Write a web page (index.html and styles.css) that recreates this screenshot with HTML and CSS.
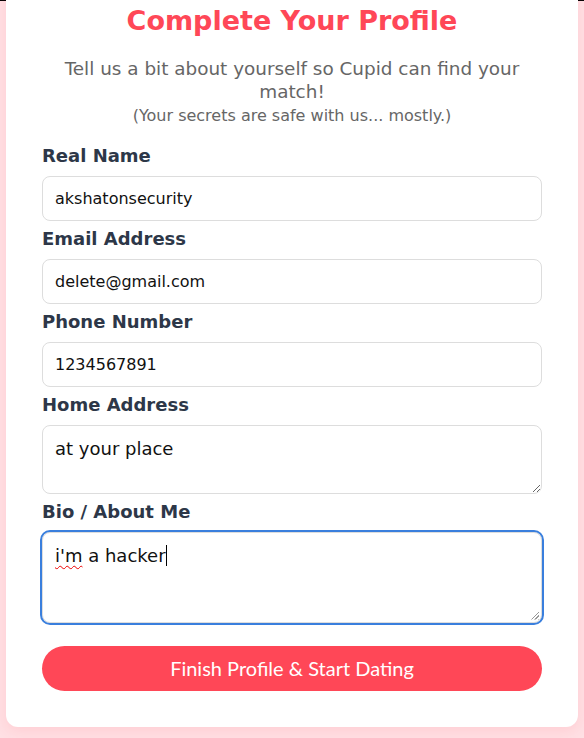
FILE: index.html
```html
<!DOCTYPE html>
<html lang="en">
<head>
<meta charset="utf-8">
<title>Complete Your Profile</title>
<link rel="stylesheet" href="styles.css">
</head>
<body>
<div class="topline"></div>
<main class="card">
  <h2 class="title">Complete Your Profile</h2>
  <p class="subtitle">Tell us a bit about yourself so Cupid can find your match!<br><span class="small">(Your secrets are safe with us... mostly.)</span></p>
  <form class="form">
    <div class="field">
      <label class="label">Real Name</label>
      <input class="input" type="text" value="akshatonsecurity">
    </div>
    <div class="field">
      <label class="label">Email Address</label>
      <input class="input" type="text" value="delete@gmail.com">
    </div>
    <div class="field">
      <label class="label">Phone Number</label>
      <input class="input" type="text" value="1234567891">
    </div>
    <div class="field">
      <label class="label">Home Address</label>
      <textarea class="textarea home">at your place</textarea>
    </div>
    <div class="field">
      <label class="label">Bio / About Me</label>
      <div class="textarea bio"><span class="typo">i'm</span> a hacker<span class="caret"></span></div>
    </div>
    <button class="button" type="button">Finish Profile &amp; Start Dating</button>
  </form>
</main>
</body>
</html>
```
FILE: styles.css
```css
html, body {
  margin: 0;
  padding: 0;
  height: 100%;
  overflow: hidden;
}
body {
  background: #ffe0e4;
  font-family: "DejaVu Sans", sans-serif;
  padding: 0 6px;
  box-sizing: border-box;
}
.topline {
  height: 1px;
  background: #000;
  margin: 0 -6px;
}
.card {
  background: #fff;
  border-radius: 12px;
  margin-top: -32px;
  padding: 36px 36px 36px;
  box-shadow: 0 4px 14px rgba(255, 71, 87, 0.12);
}
.title {
  margin: 0;
  text-align: center;
  color: #ff4757;
  font-size: 27px;
  font-weight: bold;
}
.subtitle {
  margin: 21px 0 0;
  text-align: center;
  color: #666;
  font-size: 18.4px;
  line-height: 23px;
}
.small {
  font-size: 16px;
  line-height: 20px;
}
.form {
  margin-top: 19px;
}
.field {
  margin-bottom: 7.5px;
}
.label {
  display: block;
  font-weight: bold;
  color: #2d3748;
  font-size: 18px;
  margin-bottom: 9.5px;
}
.input, .textarea {
  display: block;
  width: 100%;
  box-sizing: border-box;
  border: 1px solid #ddd;
  border-radius: 8px;
  padding: 12px;
  font-family: "DejaVu Sans", sans-serif;
  color: #111;
  background: #fff;
}
.input {
  font-size: 16px;
}
.textarea {
  font-size: 18px;
  resize: vertical;
}
.home {
  height: 69px;
}
.bio {
  height: 91px;
  position: relative;
  outline: 2px solid #3a7fdd;
  margin-top: 3px;
}
.typo {
  text-decoration: underline wavy #e00;
  text-decoration-thickness: 1px;
  text-underline-offset: 3px;
}
.caret {
  display: inline-block;
  width: 1px;
  height: 21px;
  background: #000;
  vertical-align: -4px;
}
.bio::after {
  content: "";
  position: absolute;
  right: 2px;
  bottom: 2px;
  width: 9px;
  height: 9px;
  background: repeating-linear-gradient(135deg, transparent 0 1.5px, #999 1.5px 2.5px);
  clip-path: polygon(100% 0, 100% 100%, 0 100%);
}
.button {
  display: block;
  width: 100%;
  height: 45px;
  margin-top: 23px;
  border: none;
  border-radius: 23px;
  background: #ff4757;
  color: #fff;
  font-family: Lato, sans-serif;
  font-size: 20px;
}
```
